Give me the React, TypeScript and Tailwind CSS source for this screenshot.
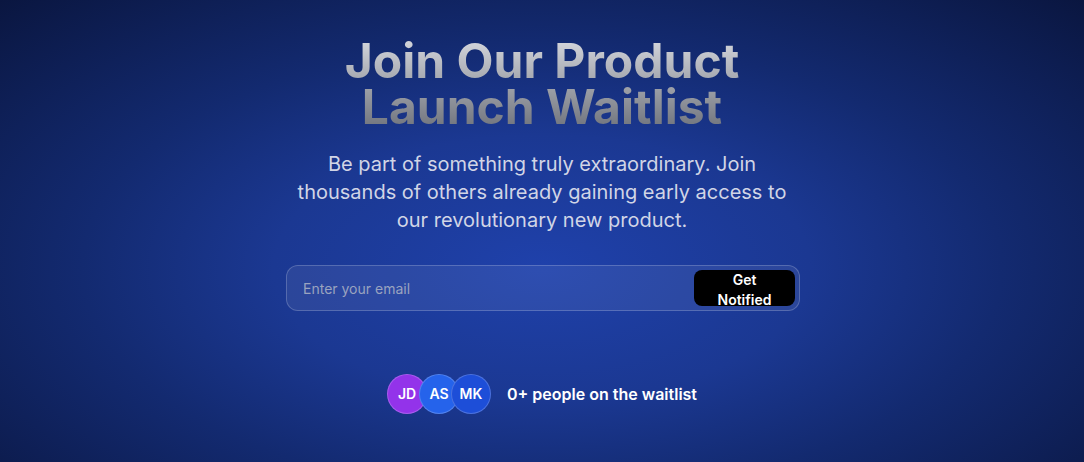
const people = [
  { initials: 'JD', color: 'bg-[#9333ea]' },
  { initials: 'AS', color: 'bg-[#2563eb]' },
  { initials: 'MK', color: 'bg-[#1d4ed8]' },
]

export default function App() {
  return (
    <div
      className="h-[462px] w-full overflow-hidden bg-[radial-gradient(ellipse_at_50%_58%,#1f41ab_0%,#1b3892_35%,#132a70_60%,#0a1640_100%)] font-['Inter',sans-serif]"
    >
      <div className="mx-auto flex max-w-2xl flex-col items-center pt-[38px] text-center">
        {/* Heading */}
        <h1 className="bg-gradient-to-b from-[#d6d8de] to-[#6f737c] bg-clip-text text-[48px] font-bold leading-[46px] text-transparent">
          Join Our Product
          <br />
          Launch Waitlist
        </h1>

        <p className="mt-5 max-w-[500px] text-xl leading-7 text-[#d1d5e6]">
          Be part of something truly extraordinary. Join thousands of others already gaining early
          access to our revolutionary new product.
        </p>

        {/* Email form */}
        <form className="ml-[2px] mt-[31px] flex h-[46px] w-[514px] items-center rounded-xl border border-white/20 bg-white/[0.07] pl-4 pr-[4px]">
          <input
            type="email"
            placeholder="Enter your email"
            className="h-full flex-1 bg-transparent text-sm text-white outline-none placeholder:text-[#9aa3bf]"
          />
          <button
            type="button"
            className="h-9 w-[101px] rounded-lg bg-black px-5 text-sm font-semibold leading-5 text-white"
          >
            Get Notified
          </button>
        </form>

        {/* Social proof */}
        <div className="mt-[63px] flex items-center gap-4">
          <div className="flex -space-x-2">
            {people.map((p) => (
              <div
                key={p.initials}
                className={`flex h-10 w-10 items-center justify-center rounded-full border border-white/20 text-sm font-semibold text-white ${p.color}`}
              >
                {p.initials}
              </div>
            ))}
          </div>
          <span className="text-base font-semibold text-white">0+ people on the waitlist</span>
        </div>
      </div>
    </div>
  )
}
